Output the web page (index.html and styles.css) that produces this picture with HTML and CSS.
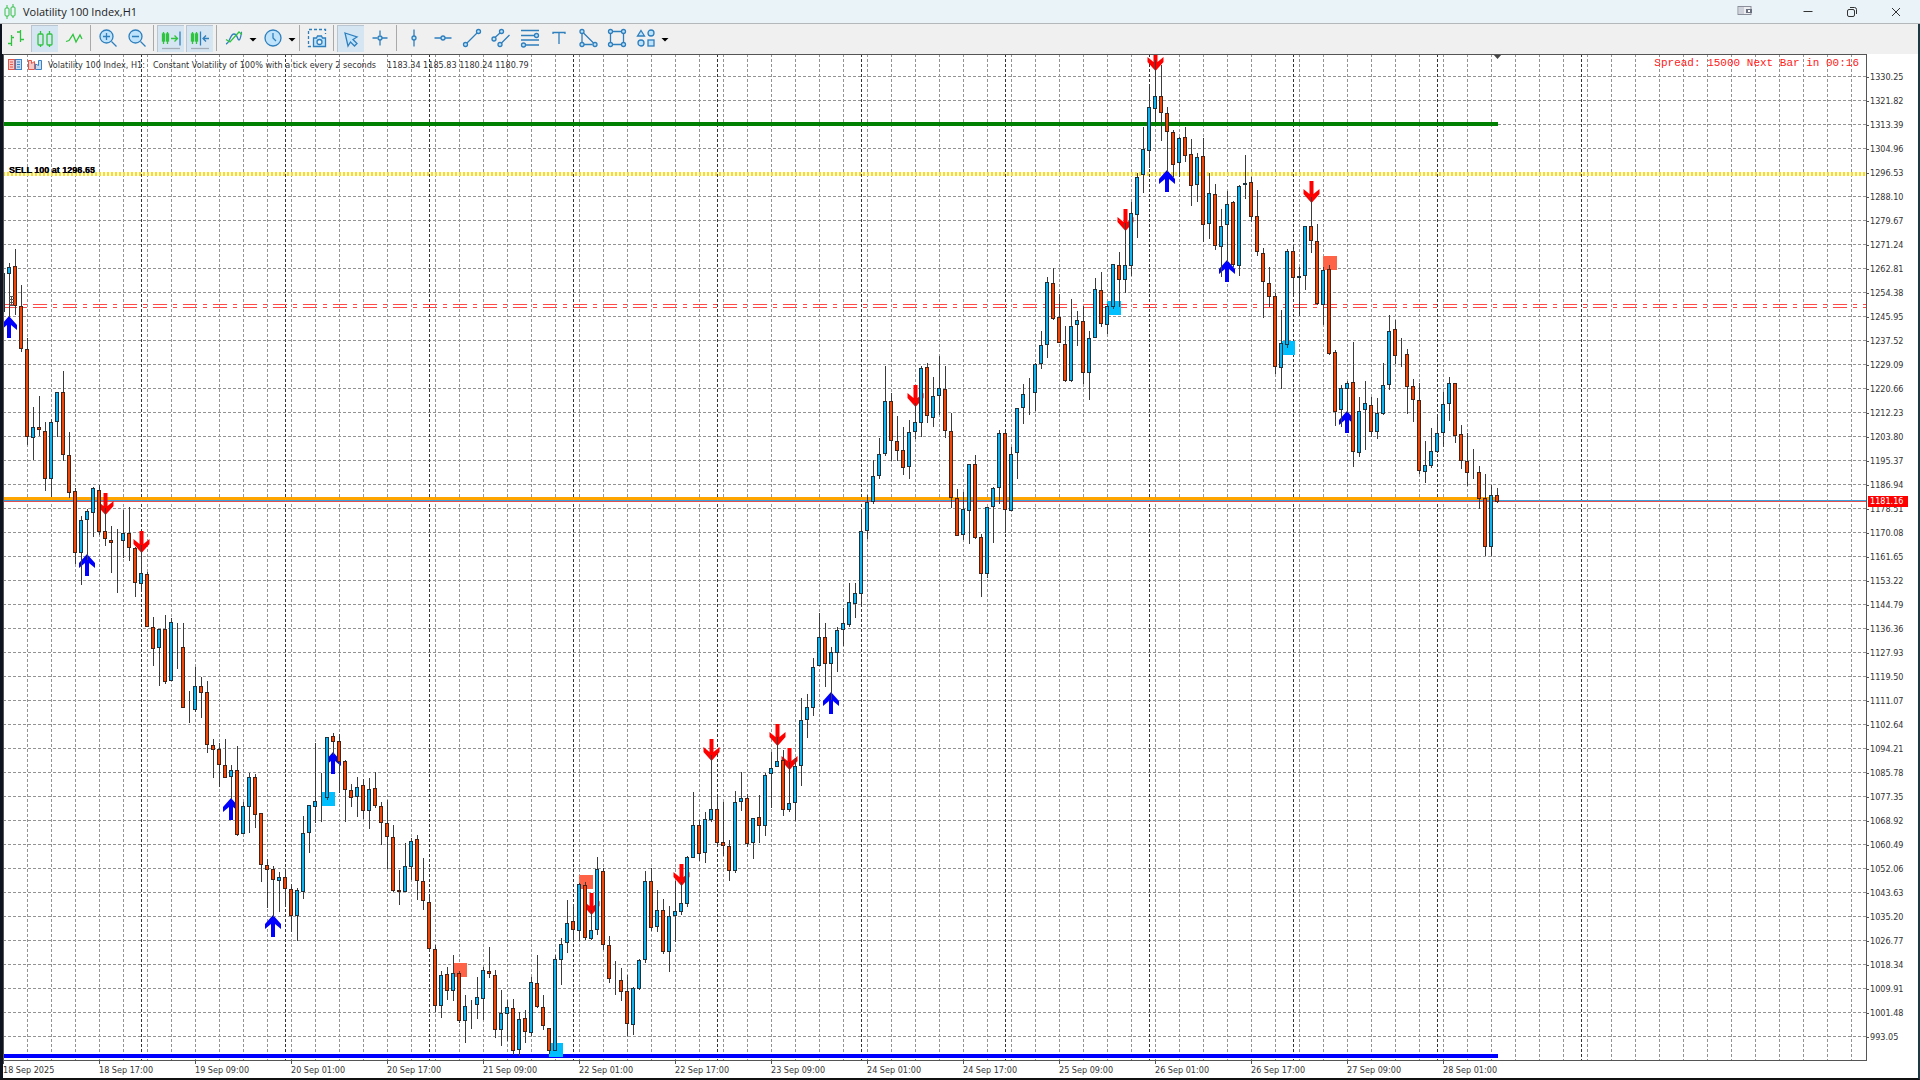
FILE: index.html
```html
<!DOCTYPE html>
<html lang="en">
<head>
    <meta charset="UTF-8">
    <meta name="viewport" content="width=device-width, initial-scale=1.0">
    <title>Volatility 100 Index,H1</title>
    <link rel="stylesheet" href="styles.css">
</head>
<body>
    <header class="titlebar">
        <svg class="app-icon" width="12" height="16" viewBox="0 0 12 16"><path d="M3 1v3M3 12v3M9 0v3M9 12v2" /><rect x="1" y="4" width="4" height="8" rx="1" /><rect x="7" y="3" width="4" height="9" rx="1" /></svg>
        <h1>Volatility 100 Index,H1</h1>
        <div class="window-buttons">
            <button class="dock" aria-label="Dock"><svg width="16" height="12" viewBox="0 0 16 12"><rect x="1" y="1.500" width="13" height="8" fill="#eceef2" stroke="#8b8f9c" /><rect x="2" y="2" width="5" height="7" fill="#cfd2db" stroke="none" /><rect x="9" y="4" width="6" height="4" fill="#6b7080" stroke="none" /><rect x="11" y="5" width="2" height="2" fill="#fff" stroke="none" /></svg></button>
            <button aria-label="Minimize"><svg width="12" height="12" viewBox="0 0 12 12"><path d="M1.500 5.500h9" /></svg></button>
            <button aria-label="Restore"><svg width="12" height="12" viewBox="0 0 12 12"><rect x="1.500" y="3.500" width="7" height="7" rx="1.500" /><path d="M4 1.500h4.500a2 2 0 0 1 2 2V8" /></svg></button>
            <button aria-label="Close"><svg width="12" height="12" viewBox="0 0 12 12"><path d="M2 2l8 8M10 2l-8 8" /></svg></button>
        </div>
    </header>

    <nav class="toolbar">
        <button aria-label="Bar chart"><svg class="green" viewBox="0 0 24 24"><path d="M7.500 9v11M4 17.500h3.500M7.500 11.500H10M16.500 4v12M13 6h3.500M16.500 13.500H20" /></svg></button>
        <button class="active" aria-label="Candlesticks"><svg class="green" viewBox="0 0 24 24"><path d="M7.500 4v3M7.500 18v2M16.500 4v3M16.500 18v2" /><rect x="5" y="7" width="5" height="11" rx="1" /><rect x="14" y="7" width="5" height="11" rx="1" /></svg></button>
        <button aria-label="Line chart"><svg class="green" viewBox="0 0 24 24"><path d="M4 15.500l3-1 4-6 3 7.500 4-7 2 4" /></svg></button>
        <span class="sep"></span>
        <button aria-label="Zoom in"><svg viewBox="0 0 24 24"><circle class="fill" cx="10.500" cy="10.500" r="6.500" /><path d="M7 10.500h7M10.500 7v7M15.500 15.500l5 5" /></svg></button>
        <button aria-label="Zoom out"><svg viewBox="0 0 24 24"><circle class="fill" cx="10.500" cy="10.500" r="6.500" /><path d="M7 10.500h7M15.500 15.500l5 5" /></svg></button>
        <span class="sep"></span>
        <button class="active" aria-label="Auto scroll"><svg viewBox="0 0 24 24"><g class="green"><path d="M4.500 5v12M8.500 5v12M12 11.500h6M15.500 8.500l3 3-3 3" /><rect x="3.500" y="7" width="2" height="7" /><rect x="7.500" y="7" width="2" height="7" /></g><path d="M21 4.500v14" /><path d="M3 21.500h18" stroke="#a4adb5" /></svg></button>
        <button class="active" aria-label="Chart shift"><svg viewBox="0 0 24 24"><g class="green"><path d="M4.500 5v12M8.500 5v12" /><rect x="3.500" y="7" width="2" height="7" /><rect x="7.500" y="7" width="2" height="7" /></g><path d="M12.500 4.500v14M21 11.500h-6M18 8.500l-3 3 3 3" /><path d="M3 21.500h18" stroke="#a4adb5" /></svg></button>
        <span class="sep"></span>
        <button aria-label="Indicators"><svg viewBox="0 0 24 24"><path d="M4 18c4-1 4-10 8-10s3 6 5 6 2-8 3-8" /><path class="green" d="M4 13.500l4 2.500 9-10 3 2.500" /></svg></button>
        <i class="caret"></i>
        <button aria-label="Periods"><svg viewBox="0 0 24 24"><circle class="fill" cx="12" cy="12" r="8" /><path d="M12 7v5l3 3" /></svg></button>
        <i class="caret"></i>
        <span class="sep"></span>
        <button aria-label="Screenshot"><svg viewBox="0 0 24 24"><path stroke-dasharray="3 2" d="M6 20.500H3.500v-17h17V8" /><path class="fill" d="M8.500 12h3l1-2h4l1 2h3v8.500h-12z" /><circle cx="14.500" cy="16" r="2.500" fill="#eef4f8" /></svg></button>
        <span class="sep"></span>
        <button class="active" aria-label="Cursor"><svg viewBox="0 0 24 24"><path class="fill" d="M6 6l12 4-4 2.500 4 4-2.500 2.500-4-4L9 19z" /></svg></button>
        <button aria-label="Crosshair"><svg viewBox="0 0 24 24"><path d="M12 4.500v5M12 14v5.500M4.500 12h5M14 12h5.500" /><circle class="fill" cx="12" cy="12" r="2" /></svg></button>
        <span class="sep"></span>
        <button aria-label="Vertical line"><svg viewBox="0 0 24 24"><path d="M12 3.500V10M12 14v6.500" /><circle class="fill" cx="12" cy="12" r="2" /></svg></button>
        <button aria-label="Horizontal line"><svg viewBox="0 0 24 24"><path d="M3.500 12H10M14 12h6.500" /><circle class="fill" cx="12" cy="12" r="2" /></svg></button>
        <button aria-label="Trend line"><svg viewBox="0 0 24 24"><path d="M6.500 17.500l11-11" /><circle class="fill" cx="5.500" cy="18.500" r="2" /><circle class="fill" cx="18.500" cy="5.500" r="2" /></svg></button>
        <button aria-label="Channel"><svg viewBox="0 0 24 24"><path d="M6 11.500l5.500-5M12 17.500l8.500-8.500" /><circle class="fill" cx="5" cy="13" r="2" /><circle class="fill" cx="12.500" cy="5.500" r="2" /><circle class="fill" cx="11" cy="18.500" r="2" /></svg></button>
        <button aria-label="Fibonacci"><svg viewBox="0 0 24 24"><path d="M3 4.500h18M3 9.500h13M3 14h18M7 19h14" /><circle class="fill" cx="18.500" cy="9.500" r="2" /><circle class="fill" cx="5.500" cy="19" r="2" /></svg></button>
        <button aria-label="Text"><svg viewBox="0 0 24 24"><path d="M6 8V6.500h12V8M12 6.500V18" /></svg></button>
        <button aria-label="Triangle"><svg viewBox="0 0 24 24"><path d="M6 7.500v9M7.500 18.500h9M7.500 7l10 10" /><circle class="fill" cx="6" cy="5.500" r="2" /><circle class="fill" cx="6" cy="18.500" r="2" /><circle class="fill" cx="19" cy="18.500" r="2" /></svg></button>
        <button aria-label="Rectangle"><svg viewBox="0 0 24 24"><path d="M7.500 5.500h9M7.500 18.500h9M5.500 7.500v9M18.500 7.500v9" /><circle class="fill" cx="5.500" cy="5.500" r="2" /><circle class="fill" cx="18.500" cy="5.500" r="2" /><circle class="fill" cx="5.500" cy="18.500" r="2" /><circle class="fill" cx="18.500" cy="18.500" r="2" /></svg></button>
        <button aria-label="Shapes"><svg viewBox="0 0 24 24"><path class="fill" d="M7 4.500L10.500 10h-7z" /><circle class="fill" cx="17" cy="7" r="3" /><circle class="fill" cx="7" cy="17" r="3" /><rect class="fill" x="14" y="14" width="6" height="6" /></svg></button>
        <i class="caret"></i>
    </nav>

    <main class="chart">
        <div class="plot" id="plot">
            <svg id="canvas" width="100%" height="100%"></svg>
            <div class="info">
                <svg width="14" height="12" viewBox="0 0 14 12"><rect x=".5" y=".5" width="6" height="10" fill="#f7c9c6" stroke="#e2574c" /><rect x="7.500" y=".5" width="6" height="10" fill="#c5dcf2" stroke="#3b82c4" /><path d="M2 3h3M2 5.500h3M2 8h3" stroke="#e2574c" /><path d="M9 3h3M9 5.500h3M9 8h3" stroke="#3b82c4" /></svg>
                <svg width="14" height="12" viewBox="0 0 14 12"><path d="M.5 1.500h3v3l3-2v8h-6z" fill="#f7c9c6" stroke="#e2574c" /><path d="M7.500 10.500V5l3 1.500v-5h3v9z" fill="#c5dcf2" stroke="#3b82c4" /></svg>
                <span class="symbol">Volatility 100 Index, H1:</span>
                <span class="desc">Constant Volatility of 100% with a tick every 2 seconds</span>
                <span>1183.34 1185.83 1180.24 1180.79</span>
            </div>
            <div class="spread">Spread: 15000 Next Bar in 00:16</div>
        </div>
        <div class="prices">
            <ol id="prices"></ol>
            <span class="last-price">1181.16</span>
        </div>
        <ol class="times" id="times"></ol>
    </main>

    <script src="script.js"></script>
</body>
</html>
```
FILE: styles.css
```css
* {
    box-sizing: border-box;
}

body {
    margin: 0;
    height: 100vh;
    display: flex;
    flex-direction: column;
    overflow: hidden;
    background: #fff;
    color: #333;
    font-family: "DejaVu Sans Condensed", "DejaVu Sans", sans-serif;
    font-size: 9px;
}

button {
    padding: 0;
    border: none;
    background: none;
    display: flex;
    align-items: center;
    justify-content: center;
}

ol {
    margin: 0;
    padding: 0;
    list-style: none;
}

/* title bar */

.titlebar {
    flex: none;
    height: 24px;
    display: flex;
    align-items: center;
    padding-left: 4px;
    background: #eaf3f7;
    border-bottom: 1px solid #b4b8ba;
}

.app-icon {
    fill: none;
    stroke: #35c04a;
}

.titlebar h1 {
    margin: 0 0 0 7px;
    font: 11px/22px "Open Sans", "Noto Sans", sans-serif;
    color: #222;
}

.window-buttons {
    display: flex;
    margin-left: auto;
    padding-right: 2px;
}

.window-buttons button {
    width: 44px;
    height: 22px;
}

.window-buttons .dock {
    margin-right: 19px;
    padding-bottom: 2px;
}

.window-buttons svg {
    fill: none;
    stroke: #333;
}

/* toolbar */

.toolbar {
    flex: none;
    height: 30px;
    display: flex;
    align-items: center;
    gap: 2px;
    padding-bottom: 2px;
    background: #f0f0f0;
    border-left: 2px solid #0d1420;
    border-right: 2px solid #173a45;
}

.toolbar button {
    width: 27px;
    height: 27px;
}

.toolbar .active {
    background: #d6e5f2;
    border-top: 1px solid #b9c6d2;
    border-left: 1px solid #b9c6d2;
}

.toolbar svg {
    width: 24px;
    height: 24px;
    fill: none;
    stroke: #2f7fbd;
    stroke-width: 1.3;
}

.toolbar .green {
    stroke: #2fc43f;
}

.toolbar .fill {
    fill: #bfe3fb;
}

.sep {
    width: 1px;
    height: 26px;
    margin: 0 1px;
    background: #a9a9a9;
}

.caret {
    width: 8px;
    height: 4px;
    margin-top: 3px;
    background: #000;
    clip-path: polygon(0 0, 100% 0, 50% 100%);
}

/* chart */

.chart {
    flex: 1;
    min-height: 0;
    display: grid;
    grid-template-columns: minmax(0, 1fr) 51px;
    grid-template-rows: minmax(0, 1fr) 17px;
    border-left: 3px solid #0d1420;
    border-right: 2px solid #173a45;
    border-bottom: 2px solid #111;
}

.plot {
    position: relative;
    overflow: hidden;
    border: 1px solid #555;
}

#canvas {
    display: block;
}

.info {
    position: absolute;
    top: 4px;
    left: 4px;
    display: flex;
    align-items: center;
    gap: 6px;
    white-space: nowrap;
}

.symbol {
    margin-right: 2px;
}

.desc {
    margin-right: 5px;
}

.spread {
    position: absolute;
    top: 2px;
    right: 7px;
    font: 11px/13px "Liberation Mono", monospace;
    color: #ff2020;
}

.prices {
    position: relative;
    overflow: hidden;
    padding-top: 11px;
}

.prices li {
    height: 24px;
    line-height: 24px;
    display: flex;
    align-items: center;
    gap: 1px;
}

.prices li::before {
    content: "";
    width: 2px;
    height: 1px;
    background: #555;
}

.last-price {
    position: absolute;
    top: 442px;
    left: 1px;
    width: 40px;
    padding-left: 2px;
    line-height: 11px;
    background: #f00;
    color: #fff;
}

.times {
    display: flex;
    overflow: hidden;
    white-space: nowrap;
}

.times li {
    flex: none;
    width: 96px;
    padding-top: 3px;
    line-height: 12px;
    position: relative;
}

.times li::before {
    content: "";
    position: absolute;
    top: 0;
    left: 0;
    width: 1px;
    height: 3px;
    background: #555;
}

/* things drawn on the canvas */

.grid {
    stroke: #939393;
    stroke-dasharray: 3 2;
}

.day {
    stroke: #333;
    stroke-dasharray: 3 2;
}

.up {
    fill: #0db2ee;
    stroke: #1c3440;
}

.down {
    fill: #f04508;
    stroke: #4a2214;
}

.wick {
    stroke: #3c3c3c;
}

.buy {
    fill: #00f;
}

.sell {
    fill: #f00;
}

.box-buy {
    fill: #00bfff;
}

.box-sell {
    fill: #ff6347;
}

.high {
    stroke: #008000;
    stroke-width: 4;
}

.mid {
    stroke: #ffa500;
    stroke-width: 4;
}

.low {
    stroke: #00f;
    stroke-width: 4;
}

.order {
    stroke: #ffdd10;
    stroke-width: 4;
    stroke-dasharray: 2 2;
}

.stop {
    stroke: #ff4a4a;
    stroke-dasharray: 14 6 4 6;
}

.bid {
    stroke: #3f9fdc;
}

.ask {
    stroke: #e05050;
}

.order-label {
    font: bold 9px "Liberation Sans", sans-serif;
    fill: #000;
}

.stop-label {
    stroke: #555;
    fill: none;
}
```
FILE: script.js
```js
const STEP = 6;        // px between bars
const FIRST = 3;       // x of the first bar
const ORIGIN = [4, 55]; // window position of the canvas

// high, body top, body bottom, low, direction (window px)
const bars = `
272 273 312 312 u|263 267 274 317 u|249 266 306 315 d|285 306 349 352 d|338 349 437 445 d
407 427 438 460 u|396 427 430 436 d|422 431 479 491 d|419 422 479 497 u|392 392 422 437 u
371 392 455 461 d|432 455 493 498 d|488 491 553 564 d|516 520 553 585 u|509 511 520 560 u
487 488 513 537 u|485 490 532 535 d|508 531 539 546 d|526 540 543 573 d|529 542 542 593 d
510 533 541 558 u|507 533 548 561 d|547 548 583 597 d|545 573 584 592 u|572 574 627 627 d
617 627 649 666 d|629 629 648 686 u|615 629 682 684 d|618 622 681 681 u|623 646 646 669 d
623 647 708 708 d|691 707 708 723 d|667 686 710 712 u|677 686 693 718 d|681 692 745 753 d
739 745 750 778 d|743 749 765 787 d|739 765 778 778 d|765 770 777 799 u|746 770 835 836 d
802 806 834 834 u|773 777 807 833 u|774 777 815 828 d|813 813 865 882 d|859 865 870 908 d
866 869 880 917 d|872 877 881 912 u|869 877 889 906 d|884 889 916 932 d|888 890 916 941 u
816 833 892 899 u|805 805 833 853 u|743 801 807 823 u|773 798 798 822 d|737 737 798 800 u
733 736 742 755 d|734 741 762 793 d|760 761 790 822 d|784 790 798 807 d|777 787 797 817 u
779 785 811 819 d|778 789 811 829 u|772 788 806 808 d|802 806 823 845 d|800 823 837 869 d
825 837 891 892 d|870 890 892 905 d|843 866 892 892 u|838 841 867 880 u|835 839 881 900 d
858 881 901 910 d|896 902 949 951 d|945 949 1006 1012 d|971 975 1006 1018 u|967 974 991 1000 d
955 973 991 1001 u|971 973 1021 1023 d|995 1006 1021 1043 u|1000 1005 1005 1029 d|977 997 1005 1019 u
967 970 999 1020 u|947 971 974 978 d|970 975 1030 1038 d|990 1013 1030 1046 u|1000 1007 1014 1041 u
999 1008 1051 1055 d|1012 1019 1050 1056 u|1010 1018 1032 1043 d|977 982 1033 1036 u|955 983 1007 1008 d
995 1007 1026 1030 d|1028 1028 1051 1054 d|955 959 1051 1051 u|938 944 960 985 u|900 923 943 953 u
904 921 930 941 d|883 884 931 941 u|882 885 938 940 d|910 930 939 940 u|857 869 930 935 u
868 871 945 950 d|936 945 979 983 d|961 979 980 995 d|968 980 992 1001 d|975 991 1024 1036 d
987 988 1025 1035 u|959 960 989 990 u|871 881 960 963 u|868 881 928 931 d|890 910 927 932 u
899 910 952 954 d|906 916 952 972 u|881 911 916 942 u|882 903 912 915 u|856 857 904 907 u
792 825 858 858 u|820 825 854 861 d|812 819 853 863 u|755 809 820 822 u|797 809 843 844 d
802 842 846 856 d|840 846 871 881 d|791 802 871 873 u|772 798 802 811 u|794 798 844 847 d
818 818 843 859 u|795 817 826 843 d|773 775 826 836 u|752 768 774 808 u|737 761 767 767 u
750 760 810 816 d|762 803 810 812 u|758 766 803 821 u|698 720 766 786 u|694 707 720 738 u
658 667 708 716 u|613 637 666 666 u|623 637 664 687 d|647 652 664 700 u|627 630 653 672 u
608 623 630 646 u|583 602 625 627 u|583 593 604 618 u|509 531 594 604 u|495 502 531 539 u
460 476 502 504 u|438 454 476 479 u|366 401 454 456 u|393 401 441 461 d|416 441 451 461 d
427 450 468 475 d|420 432 467 479 u|403 422 432 439 u|366 368 423 437 u|363 367 416 423 d
377 396 418 427 u|356 388 396 415 u|366 389 431 438 d|413 431 498 508 d|489 498 536 536 d
492 509 535 540 u|464 464 511 544 u|455 464 538 539 d|534 537 574 597 d|507 507 574 578 u
487 488 507 543 u|430 433 488 504 u|432 433 510 533 d|447 454 511 511 u|408 408 453 479 u
384 394 408 424 u|378 393 394 415 d|363 364 393 411 u|331 345 364 369 u|277 282 345 358 u
268 283 319 320 d|294 317 343 343 d|326 344 381 382 d|299 326 381 382 u|311 320 325 346 u
306 321 373 384 d|331 338 373 400 u|278 289 338 338 u|272 290 324 327 d|304 306 325 334 u
264 264 307 309 u|252 265 280 307 d|223 265 280 293 u|202 213 266 276 u|173 177 215 238 u
127 149 175 193 u|85 107 151 168 u|60 96 109 122 u|65 96 113 141 d|107 113 132 172 d
130 132 165 177 d|137 138 163 177 u|127 137 156 162 d|139 154 186 206 d|153 157 185 202 u
138 156 225 242 d|173 193 224 239 u|184 194 246 250 d|209 226 247 277 u|191 204 225 262 u
201 202 265 267 d|185 186 266 276 u|155 183 185 199 u|177 182 217 222 d|190 216 252 256 d
248 253 282 318 d|267 283 297 307 d|293 296 367 374 d|310 343 368 389 u|249 251 345 348 u
244 251 278 295 d|267 276 278 316 u|226 226 276 290 u|197 226 241 253 d|224 241 304 305 d
267 270 305 325 u|265 269 354 355 d|350 352 412 426 d|385 388 410 427 u|381 383 389 413 u
342 382 452 467 d|397 411 453 457 u|381 403 410 450 u|397 405 432 437 d|398 413 432 439 u
363 385 414 415 u|315 331 385 390 u|320 329 356 364 d|338 354 354 367 d|349 354 387 414 d
379 386 400 422 d|383 400 471 474 d|441 465 472 483 u|428 451 466 468 u|414 433 452 453 u
392 404 433 447 u|377 383 404 421 u|383 383 436 443 d|425 434 461 469 d|433 461 473 486 d
449 471 472 479 d|466 472 499 509 d|474 498 547 556 d|485 495 547 556 u|488 495 502 503 d`;

// signals: x and y of the arrow tip
const buys = [[9, 317], [87, 555], [231, 799], [273, 916], [333, 753], [831, 693], [1167, 171], [1227, 261], [1347, 412]];
const sells = [[105, 514], [141, 552], [591, 914], [681, 885], [711, 760], [777, 745], [789, 769], [915, 406], [1125, 230], [1155, 70], [1311, 202]];
const buyBoxes = [[321, 792], [549, 1043], [1107, 301], [1281, 341]];
const sellBoxes = [[453, 963], [579, 875], [1323, 256]];

// pending orders sit at almost the same price, so their labels overlap
const orders = ['SELL 100 at 1296.53', 'SELL 100 at 1298.65'];

const plot = document.getElementById('plot');
const canvas = document.getElementById('canvas');

function draw() {
    const right = plot.clientWidth + ORIGIN[0];
    const bottom = plot.clientHeight + ORIGIN[1];
    const lastBar = 1498;
    let out = `<g transform="translate(${-ORIGIN[0]} ${-ORIGIN[1]})">`;

    const hline = (y, x2, cls) => {
        out += `<path class="${cls}" d="M3 ${y}H${x2}"/>`;
    };
    const vline = (x, cls) => {
        out += `<path class="${cls}" d="M${x + 0.5} 54V${bottom}"/>`;
    };

    for (let y = 77; y < bottom; y += 24) {
        // the order line covers its own grid row
        if (y !== 173) hline(y - 0.5, right, 'grid');
    }
    for (let x = 27; x < right; x += 24) vline(x, 'grid');
    for (let x = 141; x < 1600; x += 144) vline(x, 'day');

    hline(174, right, 'order');
    hline(304.5, right, 'stop');
    hline(307.5, right, 'stop');
    hline(124, lastBar, 'high');
    hline(499, lastBar, 'mid');
    hline(500.5, right, 'bid');
    hline(501.5, right, 'ask');
    hline(1056, lastBar, 'low');

    buyBoxes.forEach(([x, y]) => out += `<rect class="box-buy" x="${x}" y="${y}" width="14" height="14"/>`);
    sellBoxes.forEach(([x, y]) => out += `<rect class="box-sell" x="${x}" y="${y}" width="14" height="14"/>`);
    buys.forEach(([x, y]) => out += `<path class="buy" d="M${x} ${y - 1}l8 9v5l-6-5v13h-4v-13l-6 5v-5z"/>`);
    sells.forEach(([x, y]) => out += `<path class="sell" d="M${x + 0.5} ${y + 1}l8-9v-5l-6 5v-13h-4v13l-6-5v5z"/>`);

    bars.trim().split(/[|\n]/).forEach((row, i) => {
        const [high, top, end, low, dir] = row.split(' ');
        const x = FIRST + i * STEP + 0.5;
        out += `<path class="wick" d="M${x} ${high}V${low}"/>`;
        out += `<rect class="${dir === 'u' ? 'up' : 'down'}" x="${x - 2}" y="${+top + 0.5}" width="3" height="${Math.max(end - top - 1, 0)}"/>`;
    });

    orders.forEach(t => out += `<text class="order-label" x="9" y="173">${t}</text>`);
    out += '<path class="stop-label" d="M9 296.500h5M9 299.500h5M9 302.500h5M9 305.500h5M11.500 296v10"/>';
    out += '<path d="M1493 54h9l-4.500 5z" fill="#444"/></g>';
    canvas.innerHTML = out;
}

for (let i = 0; i < 41; i++) {
    document.getElementById('prices').innerHTML += `<li>${(1330.25 - i * 8.43).toFixed(2)}</li>`;
}

['18 Sep 2025', '18 Sep 17:00', '19 Sep 09:00', '20 Sep 01:00', '20 Sep 17:00', '21 Sep 09:00', '22 Sep 01:00', '22 Sep 17:00',
    '23 Sep 09:00', '24 Sep 01:00', '24 Sep 17:00', '25 Sep 09:00', '26 Sep 01:00', '26 Sep 17:00', '27 Sep 09:00', '28 Sep 01:00'
].forEach(t => document.getElementById('times').innerHTML += `<li>${t}</li>`);

draw();
window.addEventListener('resize', draw);
```
